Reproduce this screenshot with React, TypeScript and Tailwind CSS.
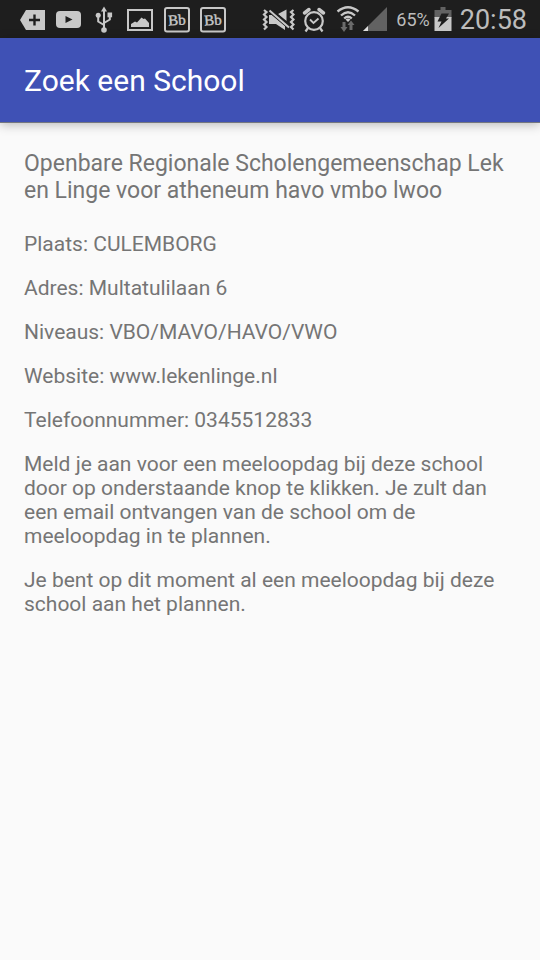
const details = [
  { label: 'Plaats', value: 'CULEMBORG' },
  { label: 'Adres', value: 'Multatulilaan 6' },
  { label: 'Niveaus', value: 'VBO/MAVO/HAVO/VWO' },
  { label: 'Website', value: 'www.lekenlinge.nl' },
  { label: 'Telefoonnummer', value: '0345512833' },
];

function NotificationIcons() {
  return (
    <div className="flex items-center gap-3">
      <svg width="26" height="26" viewBox="0 0 26 26" aria-hidden="true">
        <path d="M7 3H26V23H7L1 13Z" fill="#c8c8c8" />
        <path d="M15.5 7.5v11M10 13h11" stroke="#1e1e1e" strokeWidth="2.4" />
      </svg>
      <svg width="24" height="26" viewBox="0 0 24 26" aria-hidden="true" className="overflow-visible">
        <rect x="-1" y="4" width="25" height="17" rx="4" fill="#c8c8c8" />
        <path d="M8.5 9L15.5 12.5L8.5 16Z" fill="#1e1e1e" />
      </svg>
      <svg width="22" height="28" viewBox="-2 0 22 28" aria-hidden="true">
        <path d="M9 4V24M9 19L3.2 15.5V9M9 17L14.8 13.5V8" fill="none" stroke="#c8c8c8" strokeWidth="2" />
        <path d="M9 0.5L12 5.5H6Z" fill="#c8c8c8" />
        <circle cx="3.2" cy="9.2" r="2.5" fill="#c8c8c8" />
        <rect x="12.5" y="6.5" width="4.6" height="4.8" fill="#c8c8c8" />
        <circle cx="9" cy="24" r="2.8" fill="#c8c8c8" />
      </svg>
      <svg width="26" height="26" viewBox="0 0 26 26" aria-hidden="true">
        <rect x="1" y="3" width="24" height="20" fill="none" stroke="#c8c8c8" strokeWidth="2" />
        <path d="M4 20V17L8 14.5L10 15.5L14.5 10.5L16.5 12L18 11.5L22 16V20Z" fill="#c8c8c8" />
      </svg>
      <BlackboardIcon />
      <BlackboardIcon />
    </div>
  );
}

function BlackboardIcon() {
  return (
    <svg width="24" height="26" viewBox="0 0 24 26" aria-hidden="true" className="overflow-visible">
      <rect x="0" y="1" width="24" height="23.5" rx="2" fill="none" stroke="#c8c8c8" strokeWidth="2" />
      <text
        x="12"
        y="18"
        textAnchor="middle"
        fontSize="15"
        fill="#c8c8c8"
        stroke="#c8c8c8"
        strokeWidth="0.4"
        transform="rotate(-4 12 13)"
        className="font-['Liberation_Serif',serif]"
      >
        Bb
      </text>
    </svg>
  );
}

function SystemIcons() {
  return (
    <div className="flex items-center">
      <svg width="34" height="26" viewBox="0 0 34 26" aria-hidden="true">
        <path
          d="M3 3l2.500 2L3 7.500l2.500 2.500L3 12.500l2.500 2.500L3 17.500l2.500 2.500L3 22.500M32.500 3L30 5l2.500 2.500L30 10l2.500 2.500L30 15l2.500 2.500L30 20l2.500 2.500"
          fill="none"
          stroke="#c8c8c8"
          strokeWidth="2.2"
        />
        <path d="M8 8H11L24 19V23L15 17H8ZM17 7L25.500 2.500V14Z" fill="#c8c8c8" />
        <path d="M9 3.500L28 19.500" stroke="#1e1e1e" strokeWidth="4.6" />
        <path d="M8.500 3.500L28 20.500" stroke="#c8c8c8" strokeWidth="2" />
      </svg>
      <svg width="24" height="26" viewBox="0 0 24 26" aria-hidden="true" className="ml-[7px]">
        <circle cx="12" cy="14" r="8.8" fill="none" stroke="#c8c8c8" strokeWidth="2.2" />
        <path d="M8 12.500l3.500 3.500L16.500 11.500" fill="none" stroke="#c8c8c8" strokeWidth="1.8" />
        <path d="M2.500 6L7 2.500M17 2.500L21.500 6" stroke="#c8c8c8" strokeWidth="3.5" strokeLinecap="round" />
        <path d="M6 21L3.500 24.500M18 21L20.500 24.500" stroke="#c8c8c8" strokeWidth="2.2" />
      </svg>
      <svg width="24" height="30" viewBox="0 0 24 30" aria-hidden="true" className="ml-2.5">
        <path d="M1.5 6.5Q12 -2 22.5 6.5M5 10.5Q12 4 19 10.5M8.2 13.5Q12 10 15.8 13.5" fill="none" stroke="#c8c8c8" strokeWidth="2.3" />
        <path d="M9.5 14.5Q12 12.5 14.5 14.5L12 17Z" fill="#c8c8c8" />
        <path d="M6.5 17h3v5h2L8 27L4.500 22h2ZM13.500 25v-5h-2L15 15.500l3.500 4.500h-2v5Z" fill="#6b6b6b" />
      </svg>
      <svg width="24" height="26" viewBox="0 0 24 26" aria-hidden="true" className="ml-[3px]">
        <path d="M24 0V24H0Z" fill="#626262" />
        <path d="M5 19V24H0Z" fill="#e0e0e0" />
      </svg>
      <span className="ml-[9px] text-[18px] leading-6">65%</span>
      <svg width="18" height="26" viewBox="0 0 18 26" aria-hidden="true" className="ml-1">
        <path d="M6.500 0h5V3H17.500V11H0.500V3H6.500Z" fill="#626262" />
        <path d="M0.500 10H17.500V24H0.500Z" fill="#c8c8c8" />
        <path d="M7.500 6.500H15L12 11.500H15L4.500 21L7.500 14.500H3.500Z" fill="#1e1e1e" />
      </svg>
      <span className="ml-2 text-[27px] leading-8">20:58</span>
    </div>
  );
}

export default function App() {
  return (
    <div className="flex min-h-screen flex-col bg-[#fafafa] font-[Roboto,sans-serif] text-[#757575]">
      <div className="flex h-[38px] items-center justify-between bg-[#1e1e1e] pt-px pr-[13px] pl-[19px] text-[#bcbcbc]">
        <NotificationIcons />
        <SystemIcons />
      </div>
      <header className="flex h-[85px] items-center border-b border-[#74777f] bg-[#3f51b5] px-6 pt-0.5 shadow-[0_2px_10px_rgba(0,0,0,0.25)]">
        <h1 className="text-[30px] leading-9 text-white">Zoek een School</h1>
      </header>
      <main className="px-6 pt-[27px] text-[21px] leading-6">
        <h2 className="text-[23px] leading-[27px]">
          Openbare Regionale Scholengemeenschap Lek en Linge voor atheneum havo vmbo lwoo
        </h2>
        <div className="mt-7 flex flex-col gap-5">
          {details.map((item) => (
            <p key={item.label}>
              {item.label}: {item.value}
            </p>
          ))}
          <p>
            Meld je aan voor een meeloopdag bij deze school door op onderstaande knop te klikken. Je zult dan een
            email ontvangen van de school om de meeloopdag in te plannen.
          </p>
          <p>Je bent op dit moment al een meeloopdag bij deze school aan het plannen.</p>
        </div>
      </main>
    </div>
  );
}
